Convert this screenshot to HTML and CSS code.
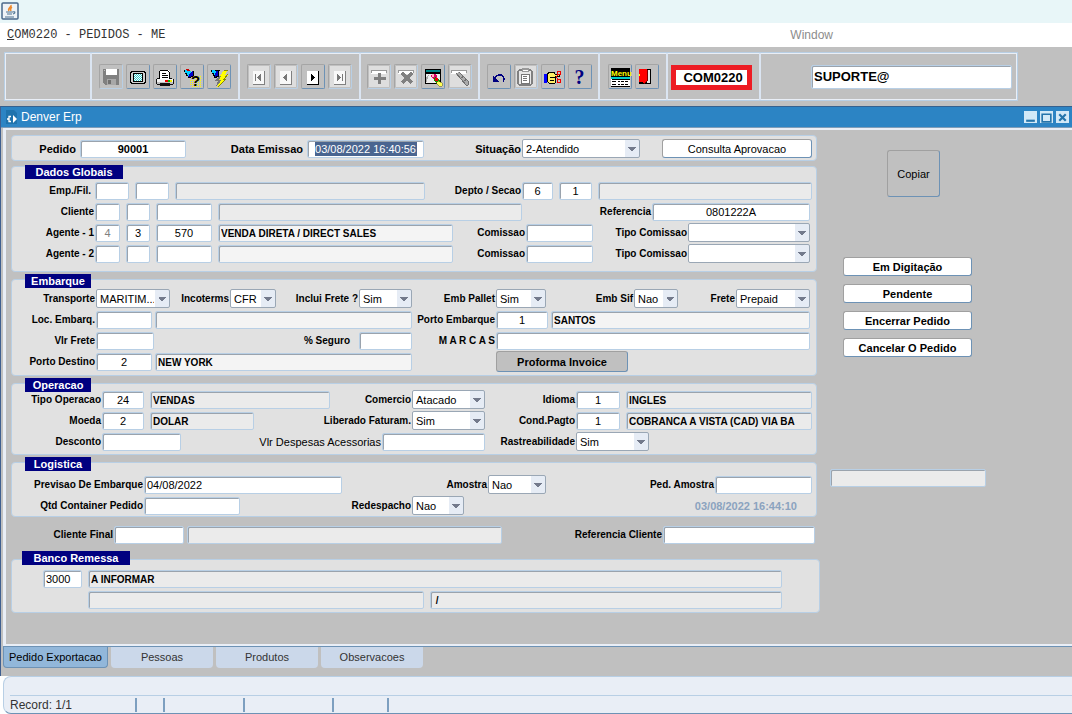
FILE: index.html
```html
<!DOCTYPE html>
<html lang="pt-BR">
<head>
    <meta charset="UTF-8">
    <meta name="viewport" content="width=device-width, initial-scale=1.0">
    <title>COM0220 - PEDIDOS - ME</title>
    <link rel="stylesheet" href="styles.css">
</head>
<body>
    <header class="app-title">
        <svg class="java-icon" width="18" height="18" viewBox="0 0 18 18">
            <rect x="1" y="1" width="16" height="16" rx="1" fill="#eef3f6" stroke="#49698a" stroke-width="1.5"/>
            <path d="M10 3c1 2-4 3-2 6M11 5c-2 1-2 2-1 4" fill="none" stroke="#ee8a2c" stroke-width="1.5"/>
            <path d="M5 10h7M6 12h5M4 15h9M12 10c2-1 3 1 0 2" fill="none" stroke="#4d7390" stroke-width="1.2"/>
        </svg>
    </header>

    <nav class="menu-bar">
        <a href="#" class="menu-form"><u>C</u>OM0220 - PEDIDOS - ME</a>
        <a href="#" class="menu-window">Window</a>
    </nav>

    <div class="toolbar-area">
        <div class="toolbar">
            <div class="cell cell-empty"></div>
            <div class="cell cell-file">
                <button class="tool off plain-off" aria-label="Salvar" disabled>
                    <svg viewBox="0 0 24 24">
                        <path d="M4 4h16v16H6l-2-2z" fill="#808080"/>
                        <path d="M7 4h11v6H7z" fill="#fff"/>
                        <path d="M5 5h1v1H5z" fill="#c0c0c0"/>
                        <path d="M8 14h9v6H8z" fill="#a8a8a8"/>
                        <path d="M9 15h3v4H9z" fill="#707070"/>
                    </svg>
                </button>
                <button class="tool" aria-label="Tela">
                    <svg viewBox="0 0 24 24">
                        <path d="M5 6h14v1h1v11h-1v1H5v-1H4V7h1z" fill="#000"/>
                        <path d="M6 7h12v1h1v9h-1v1H6v-1H5V8h1z" fill="#d0d0d0"/>
                        <path d="M7 8h10v9H7z" fill="#000"/>
                        <path d="M8 9h8v7H8z" fill="#fff"/>
                        <path d="M8 9.500h8M8 11.500h8M8 13.500h8M8 15.500h8" stroke="#3cc" stroke-dasharray="1 1"/>
                        <path d="M8 10.500h8M8 12.500h8M8 14.500h8" stroke="#3cc" stroke-dasharray="1 1" stroke-dashoffset="1"/>
                    </svg>
                </button>
                <button class="tool" aria-label="Imprimir">
                    <svg viewBox="0 0 24 24">
                        <path d="M7 5h8l2 2v7H7z" fill="#fff"/>
                        <path d="M7 5h8v1H7zM16 7h1v7h-1zM15 6h1v1h-1zM6 6h1v8H6zM9 8h4v1H9zM9 10h6v1H9zM9 12h6v1H9z" fill="#000"/>
                        <path d="M4 14h16v4H4z" fill="#f4f4f4"/>
                        <path d="M4 17h16v2H4z" fill="#c0c0c0"/>
                        <path d="M4 13h2v1H4zM17 13h2v1h-2zM3 14h1v5H3zM20 14h1v5h-1zM4 19h3v-1h10v1h3v1h-3v1H7v-1H4z" fill="#111"/>
                        <path d="M12 15h3v2h-3z" fill="#e00"/>
                        <path d="M15 15h2v2h-2z" fill="#0b0"/>
                        <path d="M17 15h2v2h-2z" fill="#ee0"/>
                    </svg>
                </button>
                <button class="tool" aria-label="Entrar consulta">
                    <svg viewBox="0 0 24 24">
                        <path d="M4 5h4l4 2-3 5-4-4z" fill="#0cf"/>
                        <path d="M12 6h1v4l-3 3H8l1-3z" fill="#00c"/>
                        <path d="M6 4h3v1H6zM7 5h3v1H7z" fill="#c00"/>
                        <path d="M4 5v2h1v2h1v2h2v2h3v-1h2v-1h1V6h-1v5h-2v1H8v-2H7V8H5V5z" fill="#000"/>
                        <path d="M14 11.500h7M12 13.500h9M10 15.500h11M10 17.500h11M10 19.500h11M12 21.500h9" stroke="#ff0" stroke-dasharray="1 1"/>
                        <text x="11" y="21" class="query-mark">?</text>
                    </svg>
                </button>
                <button class="tool" aria-label="Executar consulta">
                    <svg viewBox="0 0 24 24">
                        <path d="M4 5h4l3 2-3 4-3-3z" fill="#0cf"/>
                        <path d="M9 6h3v4l-3 3H7z" fill="#00c"/>
                        <path d="M4 5v2h1v2h1v2h1v2h3v-1h2V6h1V5h-2v6H9v1H8v-2H7V8H5V5zM8 5h3v1H8z" fill="#000"/>
                        <path d="M12 11h4l-2 4h2l-7 6 2-5H8z" fill="#777"/>
                        <path d="M17 5h4l-3 5h3l-3 4h1l-9 8 4-7h-2l2-4h-1z" fill="#ff0"/>
                        <path d="M17 5h4M21 9l-4 5h2l-8 8" fill="none" stroke="#880"/>
                    </svg>
                </button>
            </div>
            <div class="cell cell-nav">
                <button class="tool off" aria-label="Primeiro" disabled>
                    <svg viewBox="0 0 24 24">
                        <path d="M6 6h11v13H6z" fill="#f8f8f8"/><path d="M17 6h1v14H6v-1h11z" fill="#808080"/>
                        <path d="M8 9h1v7H8zM10 12.500l4-4v8z" fill="#777"/>
                    </svg>
                </button>
                <button class="tool off" aria-label="Anterior" disabled>
                    <svg viewBox="0 0 24 24">
                        <path d="M6 6h11v13H6z" fill="#f8f8f8"/><path d="M17 6h1v14H6v-1h11z" fill="#808080"/>
                        <path d="M9 12.500l4-4v8z" fill="#777"/>
                    </svg>
                </button>
                <button class="tool" aria-label="Proximo">
                    <svg viewBox="0 0 24 24">
                        <path d="M6 6h11v13H6z" fill="#fff"/><path d="M17 6h1v14H6v-1h11z" fill="#000"/>
                        <path d="M14 12.500L10 8v9z" fill="#000"/>
                    </svg>
                </button>
                <button class="tool off" aria-label="Ultimo" disabled>
                    <svg viewBox="0 0 24 24">
                        <path d="M6 6h11v13H6z" fill="#f8f8f8"/><path d="M17 6h1v14H6v-1h11z" fill="#808080"/>
                        <path d="M13 12.500L9 8v9zM14 9h1v7h-1z" fill="#777"/>
                    </svg>
                </button>
            </div>
            <div class="cell cell-record">
                <button class="tool off" aria-label="Inserir" disabled>
                    <svg viewBox="0 0 24 24">
                        <path d="M4 5h15v4H4z" fill="#fff"/><path d="M4 8V5h15v3" fill="none" stroke="#999"/>
                        <path d="M11 8h3v4h5v3h-5v4h-3v-4H7v-3h4z" fill="#808080"/>
                    </svg>
                </button>
                <button class="tool off" aria-label="Remover" disabled>
                    <svg viewBox="0 0 24 24">
                        <path d="M4 5h15v4H4z" fill="#fff"/><path d="M4 8V5h15v3" fill="none" stroke="#999"/>
                        <path d="M8 8l10 10M18 8L8 18" stroke="#808080" stroke-width="3"/>
                    </svg>
                </button>
                <button class="tool" aria-label="Limpar bloco">
                    <svg viewBox="0 0 24 24">
                        <path d="M4 4h16v15H4z" fill="#000"/><path d="M5 5h14v2H5z" fill="#088"/>
                        <path d="M5 9h14v9H5z" fill="#eee"/>
                        <path d="M5 12l3-2-3 8z" fill="#aaa"/>
                        <path d="M11 9h4l2 5-3 2-4-4z" fill="#d06"/><path d="M11 9h2v3h-2z" fill="#fbb"/>
                        <path d="M14 12l4 2 2 4-4 1-3-4z" fill="#090"/>
                        <path d="M14 13h3v3h-3z" fill="#e00"/>
                        <path d="M17 16l4 2v3h-3l-3-3z" fill="#ff5" stroke="#660" stroke-width=".5"/>
                    </svg>
                </button>
                <button class="tool off" aria-label="Limpar registro" disabled>
                    <svg viewBox="0 0 24 24">
                        <path d="M3 5h15v4H3z" fill="#fff"/><path d="M3 8V5h15v3" fill="none" stroke="#999"/>
                        <path d="M8 8l3-1 9 9v4h-2l-9-9z" fill="#aaa"/>
                        <path d="M8 8l10 12h2M11 7l9 9v4M12 14l4-3M15 17l4-3" fill="none" stroke="#707070"/>
                    </svg>
                </button>
            </div>
            <div class="cell cell-edit">
                <button class="tool" aria-label="Desfazer">
                    <svg viewBox="0 0 24 24">
                        <path d="M8 14c1-5 9-6 9 0 0 1 0 2-1 3" fill="none" stroke="#000080" stroke-width="1.3"/>
                        <path d="M6 11v6h6z" fill="#000080"/>
                    </svg>
                </button>
                <button class="tool off" aria-label="Lista" disabled>
                    <svg viewBox="0 0 24 24">
                        <rect x="4" y="5" width="14" height="15" rx="2" fill="#e8e8e8" stroke="#808080" stroke-width="1.5"/>
                        <path d="M8 3h7v4H8z" fill="#999"/><path d="M9 5h5v1H9z" fill="#fff"/><path d="M7 9h8v9H7z" fill="#fff" stroke="#777"/>
                        <path d="M9 11h4M9 13h4M9 15h4" stroke="#777"/>
                    </svg>
                </button>
                <button class="tool" aria-label="Recortar">
                    <svg viewBox="0 0 24 24">
                        <path d="M3 9h3v9H3z" fill="#00f"/>
                        <path d="M6 9l3-2h4l1 2h4v2h-4l1 2-1 5H8l-2-2z" fill="#fe6" stroke="#000"/>
                        <path d="M9 12h5M9 15h4" stroke="#000"/>
                        <path d="M15 12l3-3M15 12l3 3" stroke="#e00"/>
                        <circle cx="18" cy="8" r="2" fill="none" stroke="#e00"/><circle cx="18" cy="16" r="2" fill="none" stroke="#e00"/>
                    </svg>
                </button>
                <button class="tool help" aria-label="Ajuda">?</button>
            </div>
            <div class="cell cell-exit">
                <button class="tool" aria-label="Menu">
                    <svg viewBox="0 0 24 24">
                        <path d="M3 3h19v10H3z" fill="#000"/>
                        <text x="3" y="11" class="menu-mark">Menu</text>
                        <path d="M3 13h19v8H3z" fill="#fff"/>
                        <path d="M3 12h19v2H3z" fill="#0cc"/>
                        <path d="M4 14h18v1H4zM3 21h19v1H3zM4 16h4v1H4zM10 16h2v1h-2zM13 16h3v1h-3zM17 16h3v1h-3zM4 19h4v1H4zM10 19h2v1h-2zM13 19h3v1h-3zM17 19h3v1h-3z" fill="#000"/>
                    </svg>
                </button>
                <button class="tool" aria-label="Sair">
                    <svg viewBox="0 0 24 24">
                        <path d="M4 4h12v15H4z" fill="#000"/><path d="M12 5h3v13h-3z" fill="#e8e8e8"/>
                        <path d="M4 4h8v11l-3 3H8v-1H4z" fill="#f00"/><path d="M4 9h1v2H4z" fill="#ff0"/>
                        <path d="M12 5v11l-3 3" fill="none" stroke="#700"/>
                    </svg>
                </button>
            </div>
            <div class="cell cell-code"><input type="text" class="code-input" value="COM0220" aria-label="Programa"></div>
            <div class="cell cell-user"><input type="text" class="field user-input" value="SUPORTE@" aria-label="Usuario"></div>
        </div>
    </div>

    <div class="window">
        <div class="window-title">
            <svg width="12" height="16" viewBox="0 0 12 16">
                <path d="M0 1h8l3 3v11H0z" fill="#1f73ad"/>
                <path d="M5 7.500H3v5h2M1 10h2" stroke="#fff" fill="none" stroke-width="1.3"/><path d="M7 6l4 4-4 4z" fill="#fff"/>
            </svg>
            <h1>Denver Erp</h1>
            <button class="win-btn" aria-label="Minimizar"><svg viewBox="0 0 12 12"><path d="M2 9h8" stroke="#2474ab" stroke-width="2"/></svg></button>
            <button class="win-btn" aria-label="Maximizar"><svg viewBox="0 0 12 12"><path d="M2 3h8v7H2z" fill="none" stroke="#2474ab" stroke-width="1.5"/></svg></button>
            <button class="win-btn" aria-label="Fechar"><svg viewBox="0 0 12 12"><path d="M3 3l6 6M9 3l-6 6" stroke="#2474ab" stroke-width="2"/></svg></button>
        </div>

        <div class="window-body">
            <form class="order">
                <section class="panel head">
                    <div class="row row-head">
                        <label for="pedido">Pedido</label>
                        <input type="text" id="pedido" class="field center bold" value="90001">
                        <label for="emissao">Data Emissao</label>
                        <input type="text" id="emissao" class="field center selected" value="03/08/2022 16:40:56">
                        <label for="situacao" class="tight">Situação</label>
                        <select id="situacao"><option>2-Atendido</option></select>
                        <button type="button" class="btn">Consulta Aprovacao</button>
                    </div>
                </section>

                <section class="panel globais">
                    <h2 class="wide">Dados Globais</h2>
                    <div class="row row-emp">
                        <label for="emp" class="loose">Emp./Fil.</label>
                        <input type="text" id="emp" class="field">
                        <input type="text" class="field" aria-label="Filial">
                        <input type="text" class="field ro" aria-label="Nome da empresa" readonly>
                        <label for="depto">Depto / Secao</label>
                        <input type="text" id="depto" class="field center" value="6">
                        <input type="text" class="field center" value="1" aria-label="Secao">
                        <input type="text" class="field ro" aria-label="Nome da secao" readonly>
                    </div>
                    <div class="row row-cli">
                        <label for="cliente">Cliente</label>
                        <input type="text" id="cliente" class="field">
                        <input type="text" class="field" aria-label="Cliente filial">
                        <input type="text" class="field" aria-label="Cliente codigo">
                        <input type="text" class="field ro" aria-label="Nome do cliente" readonly>
                        <label for="referencia">Referencia</label>
                        <input type="text" id="referencia" class="field center inset" value="0801222A">
                    </div>
                    <div class="row row-agente">
                        <label for="agente1">Agente - 1</label>
                        <input type="text" id="agente1" class="field center dim" value="4">
                        <input type="text" class="field center" value="3" aria-label="Agente 1 filial">
                        <input type="text" class="field center" value="570" aria-label="Agente 1 codigo">
                        <input type="text" class="field ro pale" value="VENDA DIRETA / DIRECT SALES" aria-label="Nome do agente 1" readonly>
                        <label for="comissao1">Comissao</label>
                        <input type="text" id="comissao1" class="field">
                        <label for="tipo1">Tipo Comissao</label>
                        <select id="tipo1" class="inset"><option></option></select>
                    </div>
                    <div class="row row-agente">
                        <label for="agente2">Agente - 2</label>
                        <input type="text" id="agente2" class="field">
                        <input type="text" class="field" aria-label="Agente 2 filial">
                        <input type="text" class="field" aria-label="Agente 2 codigo">
                        <input type="text" class="field ro pale" aria-label="Nome do agente 2" readonly>
                        <label for="comissao2">Comissao</label>
                        <input type="text" id="comissao2" class="field">
                        <label for="tipo2">Tipo Comissao</label>
                        <select id="tipo2" class="inset"><option></option></select>
                    </div>
                </section>

                <section class="panel embarque">
                    <h2>Embarque</h2>
                    <div class="row row-transp">
                        <label for="transporte">Transporte</label>
                        <select id="transporte"><option>MARITIM...</option></select>
                        <label for="incoterms">Incoterms</label>
                        <select id="incoterms"><option>CFR</option></select>
                        <label for="frete-incl">Inclui Frete ?</label>
                        <select id="frete-incl"><option>Sim</option></select>
                        <label for="pallet">Emb Pallet</label>
                        <select id="pallet"><option>Sim</option></select>
                        <label for="sif">Emb Sif</label>
                        <select id="sif"><option>Nao</option></select>
                        <label for="frete">Frete</label>
                        <select id="frete" class="inset"><option>Prepaid</option></select>
                    </div>
                    <div class="row row-local">
                        <label for="loc">Loc. Embarq.</label>
                        <input type="text" id="loc" class="field">
                        <input type="text" class="field ro pale" aria-label="Local de embarque" readonly>
                        <label for="porto">Porto Embarque</label>
                        <input type="text" id="porto" class="field center" value="1">
                        <input type="text" class="field ro pale inset" value="SANTOS" aria-label="Nome do porto" readonly>
                    </div>
                    <div class="row row-frete">
                        <label for="vlr-frete">Vlr Frete</label>
                        <input type="text" id="vlr-frete" class="field">
                        <label for="seguro" class="far">% Seguro</label>
                        <input type="text" id="seguro" class="field">
                        <label for="marcas">M A R C A S</label>
                        <input type="text" id="marcas" class="field inset">
                    </div>
                    <div class="row row-local">
                        <label for="destino">Porto Destino</label>
                        <input type="text" id="destino" class="field center" value="2">
                        <input type="text" class="field ro pale" value="NEW YORK" aria-label="Nome do porto destino" readonly>
                        <button type="button" class="btn gray proforma">Proforma Invoice</button>
                    </div>
                </section>

                <section class="panel operacao">
                    <h2>Operacao</h2>
                    <div class="row row-oper">
                        <label for="tipo-op">Tipo Operacao</label>
                        <input type="text" id="tipo-op" class="field center" value="24">
                        <input type="text" class="field ro" value="VENDAS" aria-label="Nome da operacao" readonly>
                        <label for="comercio">Comercio</label>
                        <select id="comercio"><option>Atacado</option></select>
                        <label for="idioma">Idioma</label>
                        <input type="text" id="idioma" class="field center" value="1">
                        <input type="text" class="field ro" value="INGLES" aria-label="Nome do idioma" readonly>
                    </div>
                    <div class="row row-moeda">
                        <label for="moeda">Moeda</label>
                        <input type="text" id="moeda" class="field center" value="2">
                        <input type="text" class="field ro" value="DOLAR" aria-label="Nome da moeda" readonly>
                        <label for="liberado">Liberado Faturam.</label>
                        <select id="liberado"><option>Sim</option></select>
                        <label for="pagto">Cond.Pagto</label>
                        <input type="text" id="pagto" class="field center" value="1">
                        <input type="text" class="field ro" value="COBRANCA A VISTA (CAD) VIA BA" aria-label="Condicao de pagamento" readonly>
                    </div>
                    <div class="row row-desc">
                        <label for="desconto">Desconto</label>
                        <input type="text" id="desconto" class="field">
                        <label for="despesas" class="plain">Vlr Despesas Acessorias</label>
                        <input type="text" id="despesas" class="field">
                        <label for="rastreio">Rastreabilidade</label>
                        <select id="rastreio"><option>Sim</option></select>
                    </div>
                </section>

                <section class="panel logistica">
                    <h2>Logistica</h2>
                    <div class="row row-prev">
                        <label for="previsao">Previsao De Embarque</label>
                        <input type="text" id="previsao" class="field" value="04/08/2022">
                        <label for="amostra">Amostra</label>
                        <select id="amostra"><option>Nao</option></select>
                        <label for="ped-amostra">Ped. Amostra</label>
                        <input type="text" id="ped-amostra" class="field">
                    </div>
                    <div class="row row-qtd">
                        <label for="qtd">Qtd Container Pedido</label>
                        <input type="text" id="qtd" class="field">
                        <label for="redespacho">Redespacho</label>
                        <select id="redespacho"><option>Nao</option></select>
                        <time class="stamp">03/08/2022 16:44:10</time>
                    </div>
                </section>

                <div class="row row-final">
                    <label for="cli-final">Cliente Final</label>
                    <input type="text" id="cli-final" class="field">
                    <input type="text" class="field ro" aria-label="Nome do cliente final" readonly>
                    <label for="ref-cli">Referencia Cliente</label>
                    <input type="text" id="ref-cli" class="field">
                </div>

                <section class="panel banco">
                    <h2 class="wide">Banco Remessa</h2>
                    <div class="row row-banco">
                        <input type="text" class="field" value="3000" aria-label="Banco">
                        <input type="text" class="field ro" value="A INFORMAR" aria-label="Nome do banco" readonly>
                    </div>
                    <div class="row row-agencia">
                        <input type="text" class="field ro" aria-label="Agencia" readonly>
                        <input type="text" class="field ro" value=" /" aria-label="Cidade / UF" readonly>
                    </div>
                </section>
            </form>

            <aside class="side">
                <button class="btn gray copy">Copiar</button>
                <div class="actions">
                    <button class="btn bold">Em Digitação</button>
                    <button class="btn bold">Pendente</button>
                    <button class="btn bold">Encerrar Pedido</button>
                    <button class="btn bold">Cancelar O Pedido</button>
                </div>
                <input type="text" class="field ro side-info" aria-label="Mensagem" readonly>
            </aside>
        </div>

        <div class="tabs">
            <button class="tab active">Pedido Exportacao</button>
            <button class="tab">Pessoas</button>
            <button class="tab">Produtos</button>
            <button class="tab">Observacoes</button>
        </div>
    </div>

    <footer class="status">
        <div class="status-line">
            <span class="record">Record: 1/1</span>
            <span class="s1"></span>
            <span class="s2"></span>
            <span class="s3"></span>
            <span class="s4"></span>
        </div>
    </footer>
</body>
</html>
```
FILE: styles.css
```css
* {
    box-sizing: border-box;
}

body {
    margin: 0;
    min-height: 100vh;
    display: flex;
    flex-direction: column;
    background: #fff;
    color: #000;
    font: 11px "Liberation Sans", Arial, sans-serif;
}

button, input, select {
    font: inherit;
    color: inherit;
    margin: 0;
    min-width: 0;
}

/* barra do aplicativo e menu */
.app-title {
    height: 23px;
    padding: 2px 1px;
    background: #e8f6f8;
}

.menu-bar {
    display: flex;
    justify-content: space-between;
    align-items: center;
    height: 24px;
    padding: 0 239px 0 7px;
    font-size: 12px;
}

.menu-bar a {
    text-decoration: none;
    color: #333;
}

.menu-form {
    font-family: "Liberation Mono", "Courier New", monospace;
}

.menu-bar .menu-window {
    color: #8c8c8c;
}

/* barra de ferramentas */
.toolbar-area {
    background: #c0c0c0;
    padding: 5px 54px 5px 4px;
}

.toolbar {
    display: flex;
    height: 49px;
    border: 1px solid #b8cfe5;
    box-shadow: inset 0 0 0 1px #e9eef6;
}

.cell {
    display: flex;
    align-items: center;
    justify-content: center;
    gap: 3px;
    border-right: 2px solid #dbe5f2;
}

.cell-empty { width: 87px; }
.cell-file { width: 148px; }
.cell-nav { width: 121px; }
.cell-record { width: 119px; }
.cell-edit { width: 120px; }
.cell-exit { width: 68px; }

.cell-code {
    justify-content: flex-start;
    width: 93px;
    padding: 2px 0 0 3px;
}

.cell-user {
    flex: 1;
    justify-content: flex-end;
    padding-right: 5px;
    border-right: 0;
}

.tool {
    width: 24px;
    height: 25px;
    padding: 0;
    background: none;
    border: 1px solid;
    border-color: #a5a5a5 #6d92b5 #6d92b5 #a5a5a5;
    border-radius: 2px;
}

.tool.off {
    border-color: #a5a5a5 #b8cfe5 #b8cfe5 #a5a5a5;
    box-shadow: inset 0 0 0 1px #c0c0c0;
    background: #dedede;
}

.tool.plain-off {
    background: none;
}

.tool svg {
    display: block;
    width: 24px;
    height: 24px;
    margin: -1px;
    shape-rendering: crispEdges;
}

.tool.help {
    font: bold 20px/20px "Liberation Serif", serif;
    color: #000080;
}

.query-mark {
    font: bold 15px "Liberation Sans", sans-serif;
}

.menu-mark {
    font: bold 8px "Liberation Sans", sans-serif;
    fill: #ff0;
}

.code-input {
    width: 81px;
    height: 25px;
    padding: 0 0 0 3px;
    border: 5px solid #ed1c24;
    font-size: 13px;
    font-weight: bold;
    text-align: center;
}

.field.user-input {
    width: 201px;
    height: 24px;
    padding-bottom: 2px;
    font-size: 13px;
    font-weight: bold;
}

/* janela interna */
.window {
    flex: 1;
    display: flex;
    flex-direction: column;
    background: #c0c0c0;
    border-left: 1px solid #3f5f90;
}

.window-title {
    display: flex;
    align-items: center;
    gap: 3px;
    height: 22px;
    padding: 0 3px 0 5px;
    background: #2c84c4;
    border-top: 1px solid #35618f;
    border-bottom: 1px solid #7f9db9;
    color: #fff;
}

.window-title h1 {
    flex: 1;
    margin: 0;
    font-size: 12px;
    font-weight: normal;
}

.win-btn {
    width: 13px;
    height: 12px;
    padding: 0;
    border: 0;
    background: #d3e9f7;
}

.win-btn svg {
    display: block;
}

.window-body {
    flex: 1;
    display: flex;
    align-items: flex-start;
    margin-left: 2px;
    padding: 5px 0 0 5px;
    border-top: 2px solid #e9eef6;
    border-left: 3px solid #e9eef6;
    border-bottom: 2px solid #e9eef6;
}

.order {
    flex: 1;
    display: flex;
    flex-direction: column;
}

.side {
    display: flex;
    flex-direction: column;
    align-items: flex-start;
    width: 255px;
    padding: 15px 0 0 13px;
}

/* blocos */
.panel {
    position: relative;
    margin-bottom: 7px;
    padding-right: 4px;
    background: #e1e1e1;
    border: 1px solid #b8cfe5;
    border-radius: 4px;
}

.panel h2 {
    position: absolute;
    top: -6px;
    left: 13px;
    width: 66px;
    margin: 0;
    background: #000080;
    color: #fff;
    font-size: 11px;
    line-height: 14px;
    text-align: center;
}

.panel h2.wide {
    width: 98px;
}

.globais h2.wide {
    top: -2px;
}

.banco h2.wide {
    top: -9px;
    left: 10px;
    width: 108px;
}

.head {
    margin-bottom: 5px;
    padding-top: 2px;
    padding-bottom: 1px;
}

.globais {
    padding-top: 13px;
    padding-bottom: 7px;
}

.embarque {
    padding-top: 8px;
    padding-bottom: 3px;
}

.operacao {
    padding-top: 5px;
    padding-bottom: 2px;
}

.logistica {
    padding-top: 11px;
}

.banco {
    margin: 14px -3px 0 0;
    padding: 8px 37px 2px 31px;
}

/* linhas de campos */
.row {
    display: grid;
    align-items: center;
    height: 21px;
    column-gap: 6px;
}

.row label {
    margin-right: -5px;
    font-size: 10px;
    font-weight: bold;
    text-align: right;
    white-space: nowrap;
}

.row .loose {
    padding-right: 3px;
}

.row .far {
    padding-right: 8px;
}

.row label.plain {
    font-size: 11px;
    font-weight: normal;
}

.head label {
    margin-right: -2px;
    font-size: 11px;
}

.head label.tight {
    margin-right: -5px;
}

.embarque .row, .row-final {
    column-gap: 3px;
}

.embarque label, .row-final label {
    margin-right: -2px;
}

.row-head { grid-template-columns: 62px 106px 109px 117px 86px 118px 1fr; }
.row-emp { grid-template-columns: 77px 34px 34px 250px 85px 31px 33px 1fr; }
.row-cli { grid-template-columns: 77px 25px 24px 56px 304px 118px 1fr; }
.row-agente { grid-template-columns: 77px 25px 24px 56px 235px 61px 67px 83px 1fr; }
.row-transp { grid-template-columns: 81px 74px 54px 46px 77px 53px 78px 50px 82px 44px 52px 1fr; }
.row-local { grid-template-columns: 81px 56px 257px 78px 52px 1fr; }
.row-frete { grid-template-columns: 81px 58px 199px 53px 78px 1fr; }
.row-oper { grid-template-columns: 84px 42px 180px 70px 73px 79px 44px 1fr; }
.row-moeda { grid-template-columns: 84px 42px 104px 146px 73px 79px 44px 1fr; }
.row-desc { grid-template-columns: 84px 79px 189px 103px 79px 73px; }
.row-prev { grid-template-columns: 126px 198px 134px 58px 157px 1fr; }
.row-qtd { grid-template-columns: 126px 96px 160px 52px 1fr; }
.row-banco { grid-template-columns: 39px 1fr; }
.row-agencia { grid-template-columns: 336px 1fr; padding-left: 45px; }

.row-final {
    grid-template-columns: 99px 70px 315px 155px 1fr;
    padding: 0 2px 0 1px;
}

.field {
    width: 100%;
    height: 18px;
    padding: 1px 2px 0;
    background: #fff;
    border: 1px solid #b8cfe5;
    border-radius: 2px;
    box-shadow: inset 1px 1px 0 #9aa3ad;
}

.center {
    text-align: center;
}

.bold {
    font-weight: bold;
}

.dim {
    color: #808080;
}

.selected {
    color: #fff;
    background: linear-gradient(#4a6590, #4a6590) center / 102px 15px no-repeat #fff;
}

.ro {
    background: #ebebeb;
    font-size: 10px;
    font-weight: bold;
}

.pale {
    background: #f4f4f4;
}

/* seta desenhada com gradientes */
select {
    appearance: none;
    width: 100%;
    height: 19px;
    padding: 1px 15px 0 3px;
    border: 1px solid #9aa7b5;
    border-radius: 2px;
    background:
        conic-gradient(from -45deg at 50% 100%, #737a8c 90deg, transparent 0) right 3px top 7px / 8px 4px no-repeat,
        linear-gradient(#e6ecf5, #e6ecf5) right / 14px 100% no-repeat,
        #fff;
}

.row .inset {
    width: calc(100% - 2px);
}

.stamp {
    padding-right: 15px;
    color: #8ba3bf;
    font-weight: bold;
    text-align: right;
}

/* botoes */
.btn {
    height: 19px;
    padding: 0;
    background: #fff;
    border: 1px solid;
    border-color: #a0a0a0 #6d92b5 #6d92b5 #a0a0a0;
    border-radius: 3px;
}

.gray {
    background: #c0c0c0;
}

.head .btn {
    margin-left: 16px;
}

.proforma {
    grid-column: 5 / 7;
    width: 132px;
    height: 21px;
    font-weight: bold;
}

.copy {
    width: 53px;
    height: 47px;
    margin-left: 57px;
}

.actions {
    display: grid;
    gap: 8px;
    width: 129px;
    margin: 60px 0 112px 13px;
}

.side-info {
    width: 156px;
}

/* abas */
.tabs {
    display: flex;
    gap: 3px;
    height: 30px;
    margin-left: 2px;
    border-top: 1px solid #6d92b5;
}

.tab {
    width: 102px;
    height: 21px;
    padding: 0 0 1px;
    background: #cbd8ea;
    border: 0;
    border-radius: 0 0 4px 4px;
    color: #333;
}

.tab.active {
    width: 105px;
    background: #92b7da;
    border: 1px solid #6d92b5;
    border-top: 0;
    color: #000;
}

/* rodape */
.status {
    height: 38px;
    margin-left: 3px;
    padding: 18px 0 0 6px;
    background: #e9eef6;
    border: 1px solid #b8cfe5;
    border-right: 0;
    border-bottom-color: #6d92b5;
    border-radius: 8px 0 0 8px;
}

.status-line {
    display: flex;
    height: 18px;
    padding-top: 2px;
    border-top: 1px solid #b8cfe5;
    color: #333;
    font-size: 12px;
}

.status-line span {
    height: 14px;
    border-right: 2px solid #7d9fc0;
}

.record { width: 127px; }
.s1 { width: 28px; }
.s2 { width: 80px; }
.s3 { width: 89px; }
.s4 { width: 55px; }
```
